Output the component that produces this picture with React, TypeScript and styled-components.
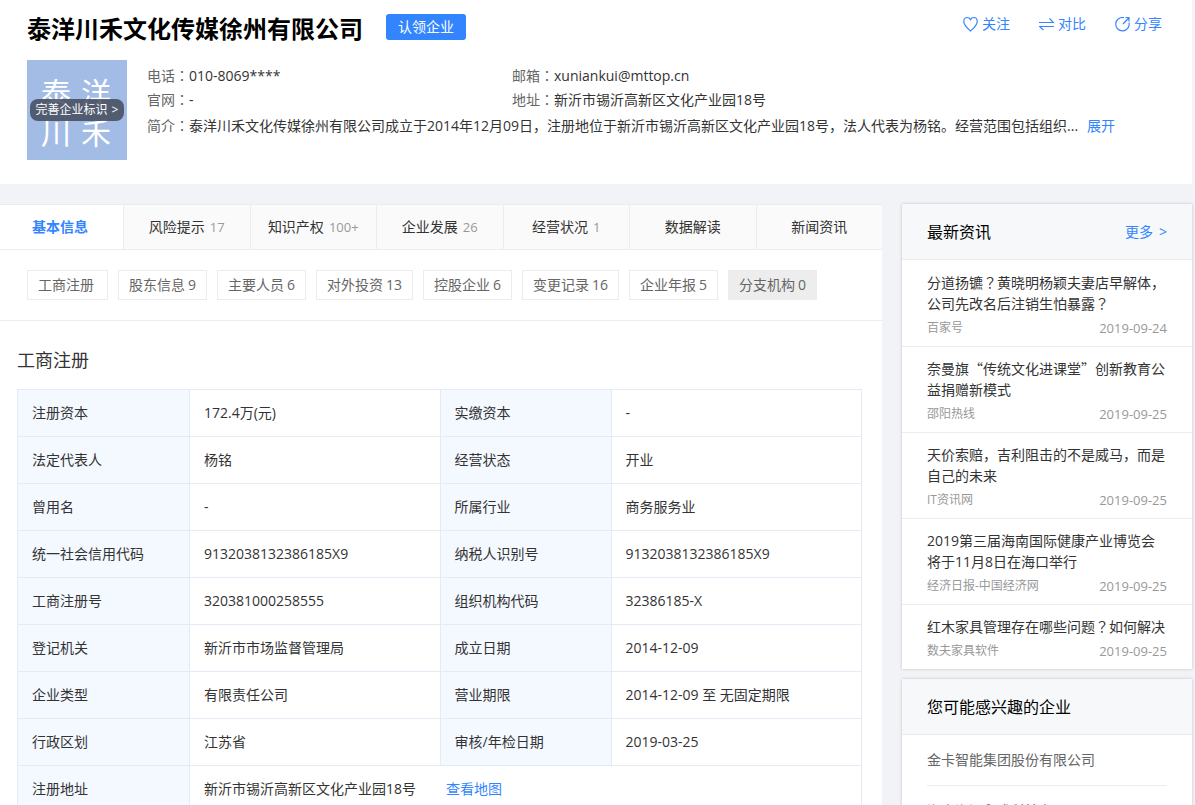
import React from "react";
import styled, { createGlobalStyle, css } from "styled-components";

const blue = "#3385ff";
const line = "#ececec";
const tableLine = "#e4eaf6";

const GlobalStyle = createGlobalStyle`
  *, *::before, *::after { box-sizing: border-box; }
  body {
    margin: 0;
    background: #f2f3f7;
    color: #333;
    font: 14px/20px "Open Sans", "Noto Sans CJK SC", sans-serif;
  }
  h1, h2, h3, p, ul, dl, dd { margin: 0; padding: 0; }
  ul { list-style: none; }
  a { color: inherit; text-decoration: none; }
  button { font: inherit; border: 0; padding: 0; background: none; cursor: pointer; }
`;

const Page = styled.div`
  padding-right: 3px;
`;

const Header = styled.header`
  background: #fff;
  min-height: 184px;
  padding: 14px 30px 0 27px;
`;

const TitleRow = styled.div`
  display: flex;
  align-items: flex-start;
  height: 46px;
`;

const CompanyName = styled.h1`
  font-size: 24px;
  line-height: 30px;
  font-weight: 700;
  color: #000;
`;

const ClaimButton = styled.button`
  width: 80px;
  height: 26px;
  margin-left: 23px;
  border-radius: 3px;
  background: ${blue};
  color: #fff;
`;

const Actions = styled.div`
  display: flex;
  gap: 29px;
  margin-left: auto;
`;

const ActionButton = styled.button`
  display: flex;
  align-items: center;
  gap: 4px;
  height: 20px;
  color: ${blue};
  svg {
    width: 15px;
    height: 16px;
    fill: none;
    stroke: ${blue};
    stroke-width: 1.2;
  }
`;

const Profile = styled.div`
  display: flex;
  gap: 20px;
`;

const Logo = styled.div`
  position: relative;
  flex: none;
  display: grid;
  grid-template-columns: 30px 30px;
  gap: 10px;
  place-content: center;
  width: 100px;
  height: 100px;
  padding: 5px 2px 0 0;
  background: #a3bce6;
  color: #fff;
  font-size: 30px;
  line-height: 30px;
`;

const LogoBadge = styled.a`
  position: absolute;
  top: 39px;
  left: 3px;
  right: 3px;
  display: flex;
  justify-content: center;
  gap: 4px;
  height: 22px;
  border-radius: 8px;
  background: rgba(68, 75, 92, 0.85);
  color: #fff;
  font-size: 12px;
  line-height: 22px;
  white-space: nowrap;
`;

const Facts = styled.dl`
  flex: 1;
  min-width: 0;
  display: grid;
  grid-template-columns: 365px 1fr;
  grid-auto-rows: 24px;
  padding-top: 4px;
`;

const Fact = styled.div<{ $wide?: boolean }>`
  display: flex;
  line-height: 24px;
  white-space: nowrap;
  min-width: 0;
  ${(p) => p.$wide && css`grid-column: 1 / -1; line-height: 28px;`}
`;

const FactLabel = styled.dt`
  flex: none;
  color: #666;
`;

const CenteredMark = styled.span`
  font-family: "Noto Sans CJK TC", sans-serif;
  line-height: 1;
`;

const WideQuote = styled.span`
  font-family: "Noto Sans CJK SC", sans-serif;
  line-height: 1;
`;

const FactLink = styled.a`
  margin-left: 9px;
  color: ${blue};
`;

const Columns = styled.div`
  display: flex;
  align-items: flex-start;
  gap: 20px;
  padding-top: 20px;
`;

const Main = styled.main`
  flex: 1;
  min-width: 0;
  background: #fff;
`;

const Tabs = styled.nav`
  display: flex;
  height: 46px;
  border-top: 1px solid ${line};
`;

const Tab = styled.button<{ $active?: boolean }>`
  flex: 1;
  display: flex;
  align-items: center;
  justify-content: center;
  gap: 5px;
  border-right: 1px solid ${line};
  border-bottom: 1px solid ${line};
  background: #fafafa;
  color: #333;
  &:last-child { border-right: 0; }
  ${(p) => p.$active && css`
    flex: 0 0 124px;
    padding-right: 3px;
    background: #fff;
    color: ${blue};
    font-weight: 700;
  `}
`;

const TabCount = styled.span`
  color: #999;
  font-size: 13px;
`;

const Chips = styled.nav`
  display: flex;
  flex-wrap: wrap;
  gap: 10px;
  padding: 20px 27px;
  border-bottom: 1px solid ${line};
`;

const Chip = styled.button<{ $empty?: boolean }>`
  display: flex;
  align-items: center;
  gap: 3px;
  min-width: 81px;
  height: 30px;
  padding: 0 10px;
  border: 1px solid ${line};
  background: ${(p) => (p.$empty ? "#ededed" : "#fff")};
  color: #666;
`;

const Section = styled.section`
  padding: 26px 20px 20px 17px;
`;

const SectionTitle = styled.h2`
  margin-bottom: 16px;
  font-size: 18px;
  line-height: 26px;
  font-weight: 400;
`;

const InfoTable = styled.table`
  width: 100%;
  table-layout: fixed;
  border-collapse: collapse;
`;

const LabelCell = styled.th<{ $width?: number }>`
  width: ${(p) => p.$width ?? 172}px;
  height: 47px;
  padding: 0 14px;
  border: 1px solid ${tableLine};
  background: #f4f8ff;
  font-weight: 400;
  text-align: left;
`;

const ValueCell = styled.td`
  padding: 0 14px;
  border: 1px solid ${tableLine};
`;

const MapLink = styled.a`
  margin-left: 30px;
  color: ${blue};
`;

const Side = styled.aside`
  flex: 0 0 290px;
  display: flex;
  flex-direction: column;
  gap: 10px;
`;

const Card = styled.section`
  background: #fff;
  box-shadow: 0 0 3px rgba(0, 0, 0, 0.2);
`;

const CardHead = styled.div`
  display: flex;
  align-items: center;
  justify-content: space-between;
  height: 56px;
  padding: 0 25px;
  border-bottom: 1px solid ${line};
  background: #f6f8fa;
`;

const CardTitle = styled.h3`
  font-size: 16px;
  line-height: 24px;
  font-weight: 400;
  color: #000;
`;

const MoreLink = styled.a`
  display: flex;
  gap: 6px;
  color: ${blue};
`;

const NewsList = styled.ul`
  padding-top: 1px;
`;

const NewsItem = styled.li`
  padding: 11px 25px 9px;
  border-bottom: 1px solid ${line};
  &:last-child { border-bottom: 0; }
`;

const NewsTitle = styled.a`
  display: block;
  margin-bottom: 5px;
  line-height: 21px;
`;

const NewsMeta = styled.div`
  display: flex;
  justify-content: space-between;
  color: #999;
  font-size: 12px;
  line-height: 18px;
`;

const NewsDate = styled.time`
  font-size: 13px;
`;

const CompanyList = styled.ul`
  padding: 0 25px;
`;

const CompanyItem = styled.li`
  height: 51px;
  border-bottom: 1px solid ${line};
  color: #666;
  line-height: 50px;
  white-space: nowrap;
`;

const tabs: [string, string?][] = [
  ["基本信息"],
  ["风险提示", "17"],
  ["知识产权", "100+"],
  ["企业发展", "26"],
  ["经营状况", "1"],
  ["数据解读"],
  ["新闻资讯"],
];

const chips: [string, number?][] = [
  ["工商注册"],
  ["股东信息", 9],
  ["主要人员", 6],
  ["对外投资", 13],
  ["控股企业", 6],
  ["变更记录", 16],
  ["企业年报", 5],
  ["分支机构", 0],
];

const rows = [
  ["注册资本", "172.4万(元)", "实缴资本", "-"],
  ["法定代表人", "杨铭", "经营状态", "开业"],
  ["曾用名", "-", "所属行业", "商务服务业"],
  ["统一社会信用代码", "9132038132386185X9", "纳税人识别号", "9132038132386185X9"],
  ["工商注册号", "320381000258555", "组织机构代码", "32386185-X"],
  ["登记机关", "新沂市市场监督管理局", "成立日期", "2014-12-09"],
  ["企业类型", "有限责任公司", "营业期限", "2014-12-09 至 无固定期限"],
  ["行政区划", "江苏省", "审核/年检日期", "2019-03-25"],
];

const news = [
  ["分道扬镳？黄晓明杨颖夫妻店早解体，公司先改名后注销生怕暴露？", "百家号", "2019-09-24"],
  ["奈曼旗“传统文化进课堂”创新教育公益捐赠新模式", "邵阳热线", "2019-09-25"],
  ["天价索赔，吉利阻击的不是威马，而是自己的未来", "IT资讯网", "2019-09-25"],
  ["2019第三届海南国际健康产业博览会将于11月8日在海口举行", "经济日报-中国经济网", "2019-09-25"],
  ["红木家具管理存在哪些问题？如何解决", "数夫家具软件", "2019-09-25"],
];

const companies = ["金卡智能集团股份有限公司", "海南海源永盛科技有限公司"];

const HeartIcon = () => (
  <svg viewBox="0 0 15 16" aria-hidden="true">
    <path d="M7.5 15C5.500 13 .8 9.500.8 5.400.8 3 2.300 1.500 4.200 1.500c1.400 0 2.600.8 3.300 2.100.7-1.300 1.900-2.100 3.300-2.100 1.900 0 3.400 1.500 3.400 3.900C14.200 9.500 9.500 13 7.500 15z" />
  </svg>
);

const CompareIcon = () => (
  <svg viewBox="0 0 15 16" aria-hidden="true">
    <path d="M0 6.500h14.500L10.500 2.500M15 10.500H.5L4.500 14" />
  </svg>
);

const ShareIcon = () => (
  <svg viewBox="0 0 15 16" aria-hidden="true">
    <path d="M9 1.700A6.700 6.700 0 1 0 14 6.700M8 8l5.700-6M10.500 1.500H14v4" />
  </svg>
);

/* Question marks sit in the middle of their em box, quotes take a full em. */
const renderTitle = (title: string) =>
  title.split(/([？“”])/).map((part, i) => {
    if (part === "？") return <CenteredMark key={i}>{part}</CenteredMark>;
    if (part === "“" || part === "”") return <WideQuote key={i}>{part}</WideQuote>;
    return part;
  });

const FactItem = ({ label, wide, children }: { label: string; wide?: boolean; children: React.ReactNode }) => (
  <Fact $wide={wide}>
    <FactLabel>
      {label}
      <CenteredMark>：</CenteredMark>
    </FactLabel>
    <dd>{children}</dd>
  </Fact>
);

export default function App() {
  return (
    <Page>
      <GlobalStyle />
      <Header>
        <TitleRow>
          <CompanyName>泰洋川禾文化传媒徐州有限公司</CompanyName>
          <ClaimButton>认领企业</ClaimButton>
          <Actions>
            <ActionButton><HeartIcon />关注</ActionButton>
            <ActionButton><CompareIcon />对比</ActionButton>
            <ActionButton><ShareIcon />分享</ActionButton>
          </Actions>
        </TitleRow>
        <Profile>
          <Logo>
            <span>泰</span>
            <span>洋</span>
            <span>川</span>
            <span>禾</span>
            <LogoBadge href="#logo">
              <span>完善企业标识</span>
              <span>&gt;</span>
            </LogoBadge>
          </Logo>
          <Facts>
            <FactItem label="电话">010-8069****</FactItem>
            <FactItem label="邮箱">xuniankui@mttop.cn</FactItem>
            <FactItem label="官网">-</FactItem>
            <FactItem label="地址">新沂市锡沂高新区文化产业园18号</FactItem>
            <FactItem label="简介" wide>
              泰洋川禾文化传媒徐州有限公司成立于2014年12月09日，注册地位于新沂市锡沂高新区文化产业园18号，法人代表为杨铭。经营范围包括组织...
              <FactLink href="#intro">展开</FactLink>
            </FactItem>
          </Facts>
        </Profile>
      </Header>
      <Columns>
        <Main>
          <Tabs>
            {tabs.map(([name, count], i) => (
              <Tab key={name} $active={i === 0}>
                {name}
                {count && <TabCount>{count}</TabCount>}
              </Tab>
            ))}
          </Tabs>
          <Chips>
            {chips.map(([name, count]) => (
              <Chip key={name} $empty={count === 0}>
                <span>{name}</span>
                {count !== undefined && <span>{count}</span>}
              </Chip>
            ))}
          </Chips>
          <Section>
            <SectionTitle>工商注册</SectionTitle>
            <InfoTable>
              <tbody>
                {rows.map(([a, b, c, d]) => (
                  <tr key={a}>
                    <LabelCell scope="row">{a}</LabelCell>
                    <ValueCell>{b}</ValueCell>
                    <LabelCell scope="row" $width={171}>{c}</LabelCell>
                    <ValueCell>{d}</ValueCell>
                  </tr>
                ))}
                <tr>
                  <LabelCell scope="row">注册地址</LabelCell>
                  <ValueCell colSpan={3}>
                    新沂市锡沂高新区文化产业园18号
                    <MapLink href="#map">查看地图</MapLink>
                  </ValueCell>
                </tr>
              </tbody>
            </InfoTable>
          </Section>
        </Main>
        <Side>
          <Card>
            <CardHead>
              <CardTitle>最新资讯</CardTitle>
              <MoreLink href="#news">
                <span>更多</span>
                <span>&gt;</span>
              </MoreLink>
            </CardHead>
            <NewsList>
              {news.map(([title, source, date]) => (
                <NewsItem key={title}>
                  <NewsTitle href="#article">{renderTitle(title)}</NewsTitle>
                  <NewsMeta>
                    <span>{source}</span>
                    <NewsDate>{date}</NewsDate>
                  </NewsMeta>
                </NewsItem>
              ))}
            </NewsList>
          </Card>
          <Card>
            <CardHead>
              <CardTitle>您可能感兴趣的企业</CardTitle>
            </CardHead>
            <CompanyList>
              {companies.map((name) => (
                <CompanyItem key={name}>
                  <a href="#company">{name}</a>
                </CompanyItem>
              ))}
            </CompanyList>
          </Card>
        </Side>
      </Columns>
    </Page>
  );
}
